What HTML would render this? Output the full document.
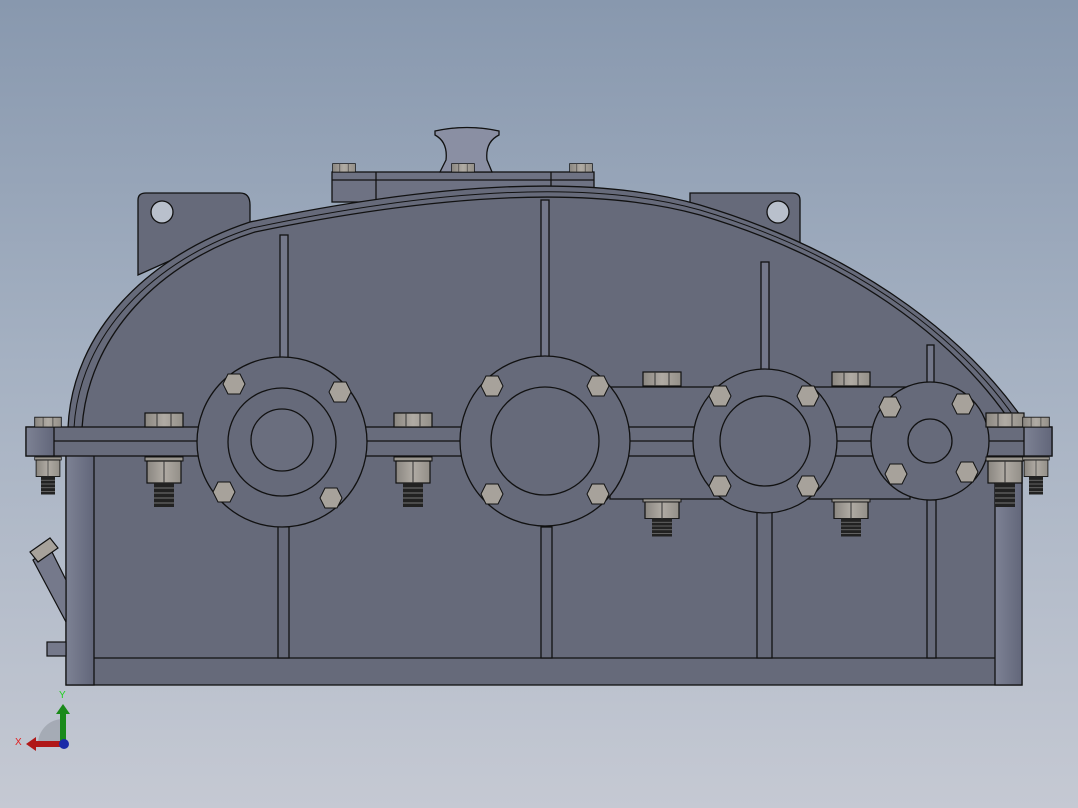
<!DOCTYPE html>
<html><head><style>
html,body{margin:0;padding:0;width:1078px;height:808px;overflow:hidden}
body{background:linear-gradient(#8898ae 0%,#a5b1c2 45%,#c5c9d3 100%)}
svg{position:absolute;left:0;top:0}
text{font-family:"Liberation Sans",sans-serif}
</style></head><body>
<svg width="1078" height="808" viewBox="0 0 1078 808">
<defs>
<linearGradient id="side" x1="0" x2="1"><stop offset="0" stop-color="#7d8294"/><stop offset="1" stop-color="#62667a"/></linearGradient>
<linearGradient id="bolt" x1="0" x2="1"><stop offset="0" stop-color="#8a8680"/><stop offset=".5" stop-color="#b0aba4"/><stop offset="1" stop-color="#938f88"/></linearGradient>
<g id="hexTop"><rect x="-19" y="-14" width="38" height="14" fill="url(#bolt)" stroke="#111" stroke-width="1.2"/><line x1="-7" y1="-14" x2="-7" y2="0" stroke="#333"/><line x1="7" y1="-14" x2="7" y2="0" stroke="#333"/></g>
<g id="nut"><rect x="-19" y="0" width="38" height="4" fill="#9a968f" stroke="#111"/><rect x="-17" y="4" width="34" height="22" fill="url(#bolt)" stroke="#111" stroke-width="1.2"/><line x1="0" y1="4" x2="0" y2="26" stroke="#333"/><rect x="-10" y="26" width="20" height="24" fill="#222"/><g stroke="#777" stroke-width="1"><line x1="-10" y1="31" x2="10" y2="31"/><line x1="-10" y1="36" x2="10" y2="36"/><line x1="-10" y1="41" x2="10" y2="41"/><line x1="-10" y1="46" x2="10" y2="46"/></g></g>
<g id="sb"><polygon points="-6,-10 6,-10 11,0 6,10 -6,10 -11,0" fill="#a7a29b" stroke="#111"/></g>
</defs>
<g stroke="#111" stroke-width="1.3" fill="#666a7a">
<path d="M138,275 L138,200 Q138,193 146,193 L240,193 Q250,193 250,205 L250,225 Z"/>
<circle cx="162" cy="212" r="11" fill="#b9c0cc"/>
<path d="M690,205 L690,193 L792,193 Q800,193 800,200 L800,245 Z"/>
<circle cx="778" cy="212" r="11" fill="#b9c0cc"/>
<rect x="332" y="172" width="262" height="30" fill="#6e7283"/>
<line x1="332" y1="180" x2="594" y2="180"/>
<line x1="376" y1="172" x2="376" y2="200"/><line x1="551" y1="172" x2="551" y2="200"/>
<path d="M435,131 Q467,124 499,131 L499,135 Q485,142 487,160 L492,172 L440,172 L446,160 Q448,142 435,135 Z" fill="#8a8fa3"/>
<path d="M68,428 C72,330 150,255 250,222 Q545,160 700,205 C850,250 960,330 1022,418 L1022,428 Z" fill="#666a7a"/>
<path d="M74,428 C79,334 155,259 252,228 Q545,166 700,210 C848,254 955,332 1015,418" fill="none" stroke-width="1"/>
<path d="M82,428 C88,335 160,262 255,232 Q545,172 700,215 C845,258 950,335 1008,418" fill="none"/>
<rect x="66" y="455" width="956" height="230" fill="#666a7a"/>
<rect x="66" y="455" width="28" height="230" fill="url(#side)"/>
<rect x="995" y="455" width="27" height="230" fill="url(#side)"/>
<line x1="94" y1="658" x2="995" y2="658"/>
<rect x="280" y="235" width="8" height="125" fill="#737789"/>
<rect x="541" y="200" width="8" height="160" fill="#737789"/>
<rect x="761" y="262" width="8" height="112" fill="#737789"/>
<rect x="927" y="345" width="7" height="40" fill="#737789"/>
<rect x="278" y="500" width="11" height="158" fill="#666a7a"/>
<rect x="541" y="527" width="11" height="131" fill="#666a7a"/>
<rect x="757" y="510" width="15" height="148" fill="#666a7a"/>
<rect x="927" y="500" width="9" height="158" fill="#666a7a"/>
<rect x="610" y="387" width="300" height="112" fill="#666a7a"/>
<rect x="26" y="427" width="1026" height="29" fill="#686c7c"/>
<line x1="26" y1="441" x2="1052" y2="441"/>
<rect x="26" y="427" width="28" height="29" fill="url(#side)"/>
<rect x="1024" y="427" width="28" height="29" fill="url(#side)"/>
<circle cx="282" cy="442" r="85"/><circle cx="282" cy="442" r="54" fill="none"/><circle cx="282" cy="440" r="31" fill="#6a6e7e"/>
<circle cx="545" cy="441" r="85"/><circle cx="545" cy="441" r="54" fill="none"/>
<circle cx="765" cy="441" r="72"/><circle cx="765" cy="441" r="45" fill="none"/>
<circle cx="930" cy="441" r="59"/><circle cx="930" cy="441" r="22" fill="none"/>
</g>
<g>
<use href="#sb" x="234" y="384"/><use href="#sb" x="340" y="392"/><use href="#sb" x="224" y="492"/><use href="#sb" x="331" y="498"/>
<use href="#sb" x="492" y="386"/><use href="#sb" x="598" y="386"/><use href="#sb" x="492" y="494"/><use href="#sb" x="598" y="494"/>
<use href="#sb" x="720" y="396"/><use href="#sb" x="808" y="396"/><use href="#sb" x="720" y="486"/><use href="#sb" x="808" y="486"/>
<use href="#sb" x="890" y="407"/><use href="#sb" x="963" y="404"/><use href="#sb" x="896" y="474"/><use href="#sb" x="967" y="472"/>
<use href="#hexTop" x="164" y="427"/><use href="#hexTop" x="413" y="427"/><use href="#hexTop" x="662" y="386"/><use href="#hexTop" x="851" y="386"/><use href="#hexTop" x="1005" y="427"/>
<g transform="translate(48,427) scale(.7,.7)"><use href="#hexTop"/></g><g transform="translate(1036,427) scale(.7,.7)"><use href="#hexTop"/></g>
<g transform="translate(344,172) scale(.6,.6)"><use href="#hexTop"/></g><g transform="translate(463,172) scale(.6,.6)"><use href="#hexTop"/></g><g transform="translate(581,172) scale(.6,.6)"><use href="#hexTop"/></g>
<use href="#nut" x="164" y="457"/><use href="#nut" x="413" y="457"/><use href="#nut" x="1005" y="457"/>
<g transform="translate(662,499) scale(1,.75)"><use href="#nut"/></g><g transform="translate(851,499) scale(1,.75)"><use href="#nut"/></g>
<g transform="translate(48,457) scale(.7,.75)"><use href="#nut"/></g><g transform="translate(1036,457) scale(.7,.75)"><use href="#nut"/></g>
</g>
<g stroke="#111" stroke-width="1.2">
<path d="M33,560 L50,548 L66,580 L66,622 Z" fill="#75798b"/>
<polygon points="30,552 50,538 58,548 38,562" fill="#a7a29b"/>
<rect x="47" y="642" width="19" height="14" fill="#75798b"/>
</g>
<path d="M63,744 L38,744 A25,25 0 0 1 63,719 Z" fill="#9aa0aa" opacity=".7"/>
<rect x="60" y="712" width="6" height="32" fill="#1a8a1a"/><polygon points="56,714 63,704 70,714" fill="#1a8a1a"/>
<rect x="34" y="741" width="29" height="6" fill="#b01818"/><polygon points="36,737 26,744 36,751" fill="#b01818"/>
<circle cx="64" cy="744" r="5" fill="#1a2aa8"/>
<text x="59" y="698" font-size="10" fill="#20d020">Y</text>
<text x="15" y="745" font-size="10" fill="#e02020">X</text>
</svg>
</body></html>
